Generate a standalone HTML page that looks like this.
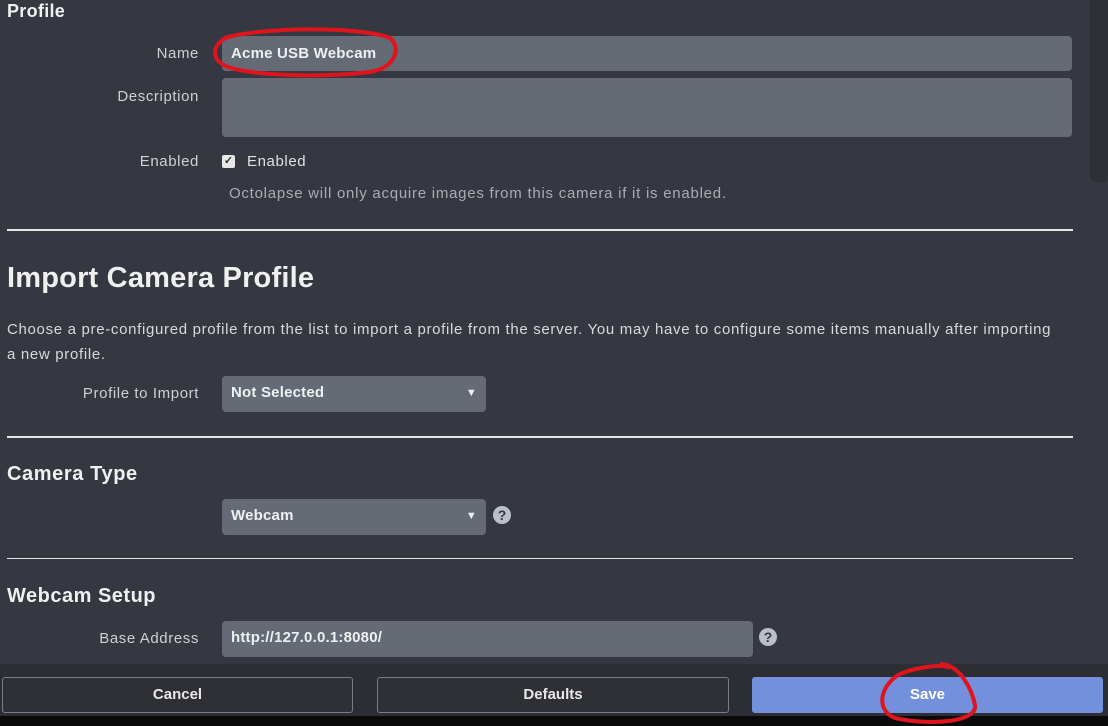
<!DOCTYPE html>
<html><head><style>
*{margin:0;padding:0;box-sizing:border-box}
body{width:1108px;height:726px;background:#353840;font-family:"Liberation Sans",sans-serif;color:#d8d9db;position:relative;overflow:hidden;font-size:15px;letter-spacing:0.6px}
.a{position:absolute}
.lbl{position:absolute;text-align:right;width:199px;left:0;color:#cfd0d2;font-size:15px}
.in{position:absolute;background:#646b75;border-radius:4px;color:#eef0f2;font-weight:bold;font-size:15px;padding-left:9px;letter-spacing:0.2px}
.hr{position:absolute;left:7px;width:1066px;height:2px;background:#e6e6e6}
h{position:absolute;left:7px;font-weight:bold;color:#f0f0f0;letter-spacing:0.3px}
.q{position:absolute;width:18px;height:18px;border-radius:50%;background:#b9c0c8;color:#353840;font-weight:bold;font-size:14px;text-align:center;line-height:18px;letter-spacing:0}
.btn{position:absolute;top:677px;height:36px;border:1px solid #7a7d83;border-radius:3px;background:#2e3035;color:#e8e8e8;font-weight:bold;text-align:center;line-height:34px;font-size:15px;letter-spacing:0}
</style></head><body>
<div class="a" style="left:1090px;top:0;width:18px;height:182px;background:#2d3035;border-radius:0 0 6px 6px"></div>
<h style="top:1px;font-size:18px">Profile</h>
<div class="lbl" style="top:45px">Name</div>
<div class="in" style="left:222px;top:36px;width:850px;height:35px;line-height:35px">Acme USB Webcam</div>
<div class="lbl" style="top:88px">Description</div>
<div class="in" style="left:222px;top:78px;width:850px;height:59px"></div>
<div class="lbl" style="top:153px">Enabled</div>
<div class="a" style="left:222px;top:155px;width:13px;height:13px;background:#e8e8e8;border-radius:2px;color:#333;font-size:11px;line-height:13px;text-align:center;font-weight:bold;letter-spacing:0">✓</div>
<div class="a" style="left:247px;top:153px;color:#e0e0e0">Enabled</div>
<div class="a" style="left:229px;top:185px;color:#a9adb3;font-size:15px;letter-spacing:0.75px">Octolapse will only acquire images from this camera if it is enabled.</div>
<div class="hr" style="top:229px"></div>
<h style="top:262px;font-size:29px;letter-spacing:0.2px">Import Camera Profile</h>
<div class="a" style="left:7px;top:317px;width:1090px;white-space:nowrap;font-size:15px;line-height:25px;color:#d8d9db;letter-spacing:0.68px">Choose a pre-configured profile from the list to import a profile from the server. You may have to configure some items manually after importing<br>a new profile.</div>
<div class="lbl" style="top:385px">Profile to Import</div>
<div class="in" style="left:222px;top:376px;width:264px;height:36px;line-height:34px">Not Selected<span style="position:absolute;right:9px;font-size:11px">▼</span></div>
<div class="hr" style="top:436px"></div>
<h style="top:463px;font-size:20px;letter-spacing:0.6px">Camera Type</h>
<div class="in" style="left:222px;top:499px;width:264px;height:36px;line-height:34px">Webcam<span style="position:absolute;right:9px;font-size:11px">▼</span></div>
<div class="q" style="left:493px;top:506px">?</div>
<div class="hr" style="top:558px;height:1px"></div>
<h style="top:585px;font-size:20px;letter-spacing:0.5px">Webcam Setup</h>
<div class="lbl" style="top:630px">Base Address</div>
<div class="in" style="left:222px;top:621px;width:531px;height:36px;line-height:34px">http://127.0.0.1:8080/</div>
<div class="q" style="left:759px;top:628px">?</div>
<div class="a" style="left:0;top:664px;width:1108px;height:52px;background:#2c2e33"></div>
<div class="a" style="left:0;top:716px;width:1108px;height:10px;background:#0a0a0a"></div>
<div class="btn" style="left:2px;width:351px">Cancel</div>
<div class="btn" style="left:377px;width:352px">Defaults</div>
<div class="btn" style="left:752px;width:351px;background:#7490dc;border-color:#7490dc;color:#fff">Save</div>
<svg class="a" style="left:0;top:0" width="1108" height="726">
<path d="M225 38 C260 27 360 26 390 38 C402 48 395 68 370 72 C320 78 240 76 222 64 C210 56 214 42 230 36" fill="none" stroke="#e0141c" stroke-width="4"/>
<path d="M940 664 C960 664 972 690 975 705 C978 722 930 726 895 718 C875 710 880 685 900 674 C920 666 945 664 950 668" fill="none" stroke="#e0141c" stroke-width="4"/>
</svg>
</body></html>
